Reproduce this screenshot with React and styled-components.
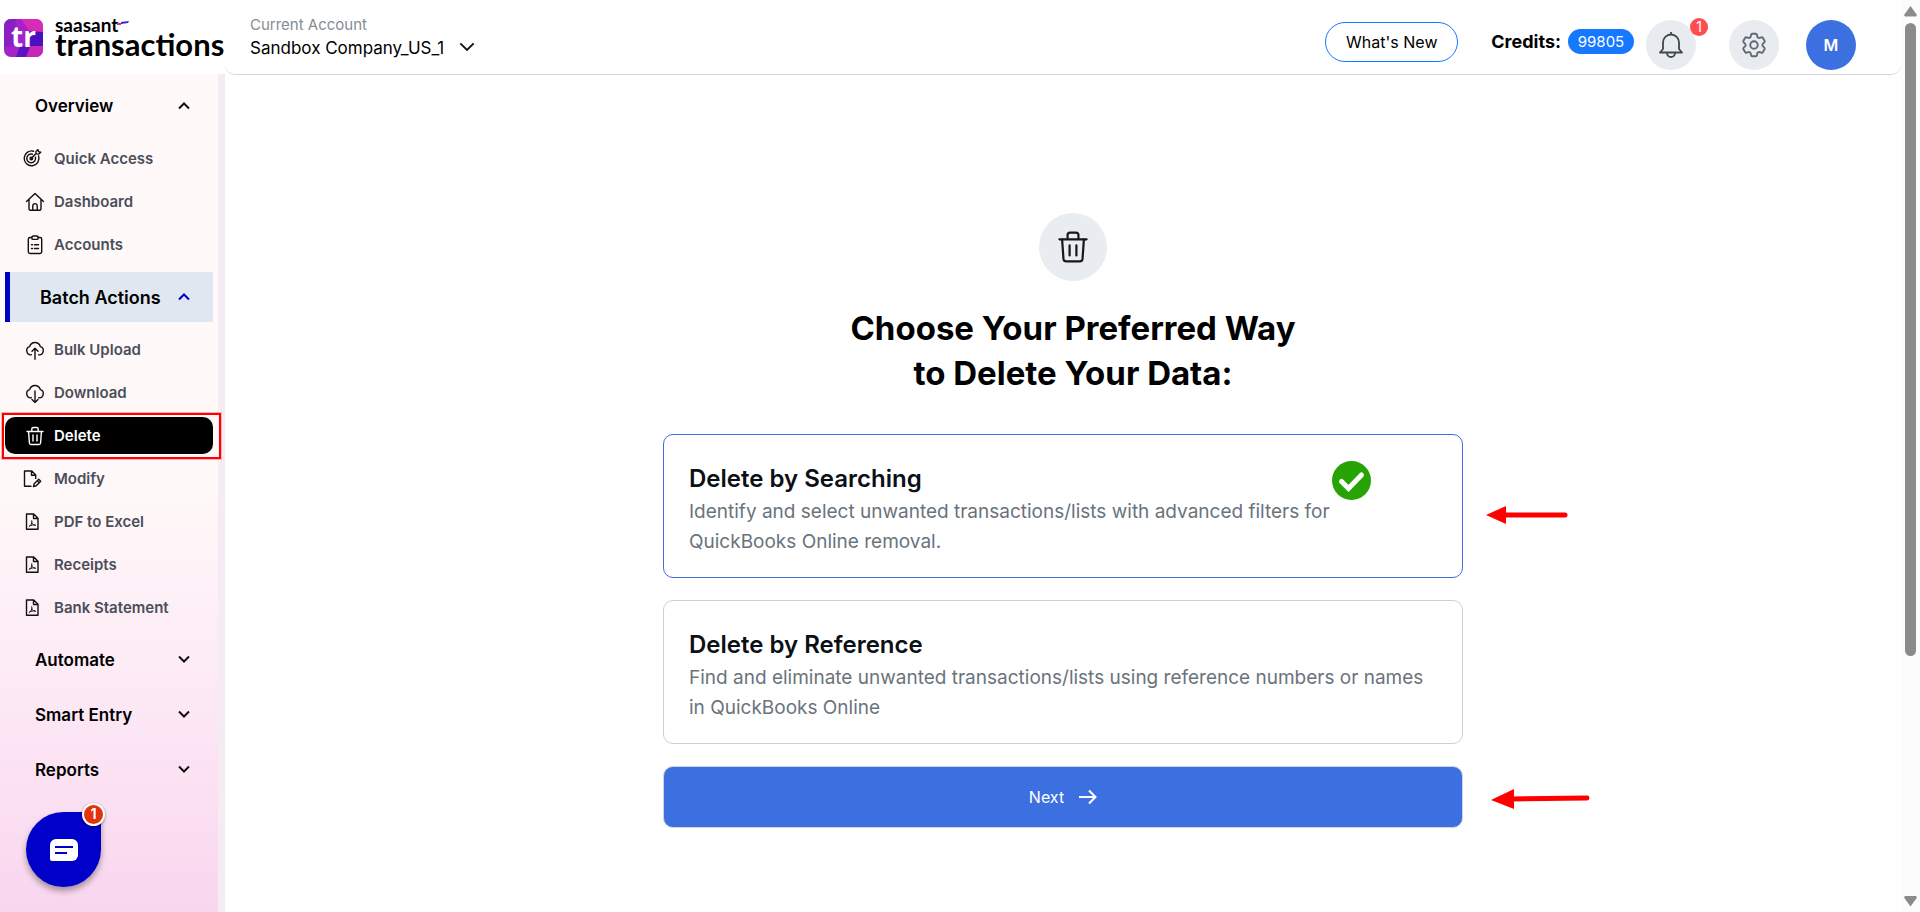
import { useState } from "react";
import styled, { createGlobalStyle } from "styled-components";
import { HiOutlineCog6Tooth } from "react-icons/hi2";

const menu = [
  {
    title: "Overview",
    open: true,
    items: [
      { label: "Quick Access", icon: "target", compact: true },
      { label: "Dashboard", icon: "home" },
      { label: "Accounts", icon: "clipboard" },
    ],
  },
  {
    title: "Batch Actions",
    open: true,
    current: true,
    items: [
      { label: "Bulk Upload", icon: "upload" },
      { label: "Download", icon: "download" },
      { label: "Delete", icon: "trash", active: true },
      { label: "Modify", icon: "modify", compact: true },
      { label: "PDF to Excel", icon: "pdf", compact: true },
      { label: "Receipts", icon: "pdf", compact: true },
      { label: "Bank Statement", icon: "pdf", compact: true },
    ],
  },
  { title: "Automate", items: [] },
  { title: "Smart Entry", items: [] },
  { title: "Reports", items: [] },
];

const options = [
  {
    id: "search",
    title: "Delete by Searching",
    text: "Identify and select unwanted transactions/lists with advanced filters for QuickBooks Online removal.",
  },
  {
    id: "reference",
    title: "Delete by Reference",
    text: "Find and eliminate unwanted transactions/lists using reference numbers or names in QuickBooks Online",
  },
];

const icons = {
  target: (
    <>
      <path d="M16.6 7A7.400 7.400 0 1 1 11.500 2.200" />
      <path d="M13.400 8.200A4.400 4.400 0 1 1 10.400 5.200" />
      <circle cx="9.300" cy="9.500" r="1.300" />
      <path d="m9.500 9.200 4.500-4.700V2.400l2-1.800.5 2 2.200.6-1.900 1.900-2.600-.2" />
    </>
  ),
  home: (
    <>
      <path d="M1.500 9.600 10 1.400l8.500 8.200M4 7.500v9.300a1.500 1.500 0 0 0 1.500 1.500h9a1.500 1.500 0 0 0 1.500-1.500V7.500" />
      <path d="M7.800 18v-4.200a2.200 2.200 0 0 1 4.400 0V18" />
    </>
  ),
  clipboard: (
    <>
      <path d="M6.800 2.500H5A1.700 1.700 0 0 0 3.300 4.200v12.600A1.700 1.700 0 0 0 5 18.500h10a1.700 1.700 0 0 0 1.700-1.700V4.200A1.700 1.700 0 0 0 15 2.500h-1.800" />
      <rect x="6.800" y="1" width="6.400" height="3.400" rx="1.500" />
      <path d="M6.500 9.800h1M9.500 9.800h4M6.500 13.500h1M9.500 13.500h4" />
    </>
  ),
  upload: (
    <>
      <path d="M6.300 14.800A4.200 4.200 0 0 1 4.700 6.600 5.500 5.500 0 0 1 15.300 6.600 4.200 4.200 0 0 1 13.700 14.800" />
      <path d="M10 19.300V8.500M7 11.300l3-3 3 3" />
    </>
  ),
  download: (
    <>
      <path d="M6.300 14.800A4.200 4.200 0 0 1 4.700 6.600 5.500 5.500 0 0 1 15.300 6.600 4.200 4.200 0 0 1 13.700 14.800" />
      <path d="M10 8v11.200M7 16.500l3 3 3-3" />
    </>
  ),
  trash: (
    <>
      <path d="M2 5.500h16M6.800 5.300V3a1.500 1.500 0 0 1 1.500-1.500h3.400A1.500 1.500 0 0 1 13.200 3v2.300" />
      <path d="m3.600 5.700.8 11.300a1.700 1.700 0 0 0 1.700 1.500h7.800a1.700 1.700 0 0 0 1.700-1.500l.8-11.300" />
      <path d="M8 9v6M12 9v6" />
    </>
  ),
  modify: (
    <>
      <path d="M9 17.300H2.500V2h7.300l3.900 3.900v3.500M9.500 2.200v4h4" />
      <path d="m11.500 17.500.7-2.700 4.500-4.500 2 2-4.500 4.500-2.700.7ZM15.300 11.700l2 2" />
    </>
  ),
  pdf: (
    <>
      <path d="M4.500 2h7.200l4.300 4.300v11H4.500ZM11.500 2.200v4.300H16" />
      <path d="M9.800 8.700c.5 2.700-.6 4.600-2.600 5.700M9.900 10.700c.6 1.600 1.700 2.500 3.700 2.600M7.800 13.900c1.500-.9 3.200-1.100 5-1" strokeWidth="1" />
    </>
  ),
};

function Icon({ name, size = 20, stroke = 1.4 }) {
  return (
    <svg
      width={size}
      height={size}
      viewBox="0 0 20 20"
      fill="none"
      stroke="currentColor"
      strokeWidth={stroke}
      strokeLinecap="round"
      strokeLinejoin="round"
      aria-hidden="true"
    >
      {icons[name]}
    </svg>
  );
}

function Chevron({ up, width = 12, color = "#111" }) {
  return (
    <svg width={width} height={width} viewBox="0 0 12 12" fill="none" stroke={color} strokeWidth={width > 12 ? 1.4 : 2} aria-hidden="true">
      <path d={up ? "M1 8.500 6 3.500l5 5" : "M1 2.500l5 5 5-5"} />
    </svg>
  );
}

function Logo() {
  return (
    <Brand href="#">
      <BrandMark>
        <svg width="39" height="38" viewBox="0 0 39 38" aria-hidden="true">
          <path fill="#a522c9" d="M0 0h39v38H0z" />
          <path fill="#d92bb5" d="M17 0h22v13H26z" />
          <path fill="#8a1fc2" d="M0 0h12L10 27 0 28z" />
          <path fill="#4b0fc0" d="m25 12 14 1v14H25z" />
          <path fill="#c727b9" d="M26 27h13v11H21z" />
          <path fill="#5a14c4" d="m12 38 4-11 10 1-4 10z" />
        </svg>
        <span>tr</span>
      </BrandMark>
      <BrandName>
        <small>saasant</small>
        <svg width="12" height="4" viewBox="0 0 12 4" aria-hidden="true">
          <path fill="#e0219b" d="M0 2h4v2H0z" />
          <path fill="#3323d6" d="m4 1 8-1-1 2-7 1z" />
        </svg>
        <strong>transactions</strong>
      </BrandName>
    </Brand>
  );
}

function Sidebar() {
  return (
    <SidePanel>
      <Logo />
      <Nav>
        {menu.map((group) => (
          <section key={group.title}>
            <GroupButton type="button" $current={group.current} aria-expanded={!!group.open}>
              {group.title}
              <Chevron up={group.open} color={group.current ? "#0000c4" : "#111"} />
            </GroupButton>
            {group.items.length > 0 && (
              <ItemList>
                {group.items.map((item) => (
                  <li key={item.label}>
                    <ItemLink href="#" $active={item.active} $compact={item.compact}>
                      <Icon name={item.icon} />
                      {item.label}
                      {item.active && <Highlight />}
                    </ItemLink>
                  </li>
                ))}
              </ItemList>
            )}
          </section>
        ))}
      </Nav>
      <ChatButton type="button" aria-label="Open chat">
        <svg width="28" height="22" viewBox="0 0 28 22" aria-hidden="true">
          <path fill="#fff" d="M6 0h16a6 6 0 0 1 6 6v10a6 6 0 0 1-6 6H2a2 2 0 0 1-2-2V6a6 6 0 0 1 6-6Z" />
          <path stroke="#0000c9" strokeWidth="2" d="M5 8h18M5 14h12" />
        </svg>
        <ChatBadge>1</ChatBadge>
      </ChatButton>
    </SidePanel>
  );
}

function Header() {
  return (
    <TopBar>
      <Account type="button">
        <small>Current Account</small>
        <span>
          Sandbox Company_US_1
          <Chevron width={16} />
        </span>
      </Account>
      <Actions>
        <NewsButton type="button">What's New</NewsButton>
        <Credits>
          Credits: <span>99805</span>
        </Credits>
        <RoundButton type="button" aria-label="Notifications">
          <svg width="26" height="28" viewBox="0 0 26 28" fill="none" stroke="#40464d" strokeWidth="1.800" strokeLinejoin="round" aria-hidden="true">
            <path d="M2 21.500h22l-3-3.500v-6.500a8 8 0 0 0-16 0V18ZM13 3.500V1M9 22a4 4 0 0 0 8 0" />
          </svg>
          <Badge>1</Badge>
        </RoundButton>
        <RoundButton type="button" aria-label="Settings">
          <HiOutlineCog6Tooth size={30} />
        </RoundButton>
        <RoundButton type="button" $primary>
          M
        </RoundButton>
      </Actions>
    </TopBar>
  );
}

function DeleteWizard() {
  const [selected, setSelected] = useState("search");

  return (
    <Wizard>
      <Intro>
        <IntroIcon>
          <Icon name="trash" size={34} stroke={1.3} />
        </IntroIcon>
        <h1>
          Choose Your Preferred Way
          <br />
          to Delete Your Data:
        </h1>
      </Intro>
      <Choices>
        {options.map((option) => (
          <Card key={option.id} $selected={selected === option.id}>
            <input
              type="radio"
              name="delete-mode"
              checked={selected === option.id}
              onChange={() => setSelected(option.id)}
            />
            <CardText $selected={selected === option.id}>
              <h2>{option.title}</h2>
              <p>{option.text}</p>
            </CardText>
            {selected === option.id && (
              <svg width="40" height="40" viewBox="0 0 40 40" aria-hidden="true">
                <circle cx="19.500" cy="19.500" r="19.500" fill="#27a306" />
                <path d="m9.500 20.500 7 7L29.500 14" fill="none" stroke="#fff" strokeWidth="5" strokeLinecap="round" />
              </svg>
            )}
            {option.id === "search" && (
              <Pointer>
                <svg width="84" height="20" viewBox="0 0 84 20" aria-hidden="true">
                  <path fill="red" d="m0 10 20-9v18z" />
                  <path stroke="red" strokeWidth="5" strokeLinecap="round" d="M18 10h61" />
                </svg>
              </Pointer>
            )}
          </Card>
        ))}
        <NextButton type="button">
          Next
          <svg width="18" height="16" viewBox="0 0 18 16" fill="none" stroke="currentColor" strokeWidth="2" aria-hidden="true">
            <path d="M0 8h16M10 1.500 16.500 8 10 14.500" />
          </svg>
          <Pointer $wide>
            <svg width="100" height="22" viewBox="0 0 100 22" aria-hidden="true">
              <path fill="red" d="m0 12 23-11v20z" />
              <path stroke="red" strokeWidth="5" strokeLinecap="round" d="m21 11 75-1" />
            </svg>
          </Pointer>
        </NextButton>
      </Choices>
    </Wizard>
  );
}

export default function App() {
  return (
    <>
      <GlobalStyle />
      <Page>
        <Sidebar />
        <Main>
          <Header />
          <DeleteWizard />
        </Main>
        <ScrollTrack aria-hidden="true">
          <svg width="13" height="11" viewBox="0 0 13 11">
            <path fill="#8b8b8b" d="M6.500 0 13 9l-1 1.500H1L0 9z" />
          </svg>
          <ScrollSpace>
            <ScrollThumb />
          </ScrollSpace>
          <svg width="13" height="11" viewBox="0 0 13 11">
            <path fill="#8b8b8b" d="M6.500 10.500 0 1.500 1 0h11l1 1.500z" />
          </svg>
        </ScrollTrack>
      </Page>
    </>
  );
}

const GlobalStyle = createGlobalStyle`
  * {
    box-sizing: border-box;
    margin: 0;
    padding: 0;
  }

  body {
    background: #fff;
    color: #000;
    font-family: Inter, "Liberation Sans", sans-serif;
    font-size: 16px;
  }

  button {
    border: none;
    background: none;
    color: inherit;
    font: inherit;
    cursor: pointer;
  }

  a {
    color: inherit;
    text-decoration: none;
  }
`;

const Page = styled.div`
  display: flex;
  min-height: 100vh;
`;

const SidePanel = styled.aside`
  flex: none;
  width: 225px;
  display: flex;
  flex-direction: column;
`;

const Brand = styled.a`
  height: 74px;
  padding: 19px 0 0 4px;
  display: flex;
  align-items: flex-start;
  gap: 12px;
`;

const BrandMark = styled.span`
  display: grid;
  grid-template-rows: 38px;
  width: 39px;

  > * {
    grid-area: 1 / 1;
  }

  svg {
    border-radius: 7px;
  }

  span {
    z-index: 1;
    color: #fff;
    font-family: "Open Sans", sans-serif;
    font-size: 28px;
    font-weight: 700;
    line-height: 35px;
    text-align: center;
  }
`;

const BrandName = styled.span`
  position: relative;
  display: flex;
  flex-direction: column;
  font-family: Lato, sans-serif;

  small {
    font-size: 19px;
    font-weight: 700;
    line-height: 12px;
  }

  svg {
    position: absolute;
    top: 2px;
    left: 62px;
  }

  strong {
    font-size: 31px;
    font-weight: 700;
    line-height: 27px;
  }
`;

const Nav = styled.nav`
  flex: 1;
  padding: 7px 5px 0;
  border-right: 7px solid #f4ebf3;
  background: linear-gradient(#fff9f9 0, #fff8f8 50%, #fdeaf6 72%, #f9d6ee 100%);
`;

const GroupButton = styled.button`
  width: 208px;
  height: 50px;
  margin-bottom: 5px;
  padding: 0 23px 0 30px;
  display: flex;
  align-items: center;
  justify-content: space-between;
  font-size: 17px;
  font-weight: 600;

  ${({ $current }) =>
    $current &&
    `
    border-left: 5px solid #0000c4;
    background: #dfe8f1;
    font-size: 18px;
  `}
`;

const ItemList = styled.ul`
  padding: 4px 0 9px;
  display: flex;
  flex-direction: column;
  gap: 6px;
  list-style: none;
`;

const ItemLink = styled.a`
  position: relative;
  width: 208px;
  height: 37px;
  padding-left: ${({ $compact }) => ($compact ? "17px" : "20px")};
  border-radius: 10px;
  display: flex;
  align-items: center;
  gap: ${({ $compact }) => ($compact ? "12px" : "9px")};
  background: ${({ $active }) => ($active ? "#000" : "none")};
  color: ${({ $active }) => ($active ? "#fff" : "#4a4e5a")};
  font-size: 15px;
  font-weight: 600;

  svg {
    color: ${({ $active }) => ($active ? "#fff" : "#111")};
  }
`;

const Highlight = styled.span`
  position: absolute;
  inset: -4px -8px -5px -3px;
  border: 2px solid red;
  box-shadow: 0 0 0 1px #ffb3b3;
`;

const ChatButton = styled.button`
  position: fixed;
  left: 26px;
  bottom: 25px;
  width: 75px;
  height: 75px;
  border-radius: 50% 0 50% 50%;
  display: flex;
  align-items: center;
  justify-content: center;
  background: #0000c9;
  box-shadow: 0 4px 6px rgba(0, 0, 0, 0.35);
`;

const ChatBadge = styled.span`
  position: absolute;
  top: -9px;
  right: -4px;
  width: 23px;
  height: 23px;
  border: 2px solid #fff;
  border-radius: 50%;
  background: #e03410;
  color: #fff;
  font-size: 14px;
  font-weight: 700;
  line-height: 17px;
  box-shadow: 0 1px 3px rgba(0, 0, 0, 0.4);
`;

const Main = styled.main`
  flex: 1;
  min-width: 0;
`;

const TopBar = styled.header`
  height: 75px;
  padding: 14px 45px 0 25px;
  border-bottom: 1px solid #d5d8da;
  border-radius: 0 0 10px 10px;
  display: flex;
  align-items: flex-start;
  justify-content: space-between;
`;

const Account = styled.button`
  text-align: left;

  small {
    display: block;
    color: #858d94;
    font-size: 15px;
    line-height: 22px;
  }

  span {
    display: flex;
    align-items: center;
    gap: 15px;
    font-size: 17px;
    line-height: 24px;
  }
`;

const Actions = styled.div`
  display: flex;
  align-items: center;
  height: 61px;
`;

const NewsButton = styled.button`
  width: 133px;
  height: 40px;
  margin: 0 33px 5px 0;
  border: 1px solid #1677ff;
  border-radius: 20px;
  font-size: 16px;
`;

const Credits = styled.div`
  margin: 0 12px 6px 0;
  display: flex;
  align-items: center;
  gap: 7px;
  font-size: 18px;
  font-weight: 700;

  span {
    width: 66px;
    border-radius: 13px;
    background: #1677ff;
    color: #fff;
    font-size: 15px;
    font-weight: 400;
    line-height: 25px;
    text-align: center;
  }
`;

const RoundButton = styled.button`
  position: relative;
  width: 50px;
  height: 50px;
  border-radius: 50%;
  display: flex;
  align-items: center;
  justify-content: center;
  background: ${({ $primary }) => ($primary ? "#3c6fe0" : "#e8ebef")};
  color: ${({ $primary }) => ($primary ? "#fff" : "#5f6972")};
  font-weight: 600;

  & + & {
    margin-left: 33px;
  }

  &:last-child {
    margin-left: 27px;
  }
`;

const Badge = styled.span`
  position: absolute;
  top: -2px;
  right: -12px;
  width: 18px;
  height: 18px;
  border-radius: 50%;
  background: #ff4d4f;
  color: #fff;
  font-size: 14px;
  font-weight: 400;
  line-height: 18px;
`;

const Wizard = styled.div`
  padding: 138px 20px 40px;
  display: flex;
  flex-direction: column;
  align-items: center;
`;

const Intro = styled.div`
  padding-left: 20px;
  display: flex;
  flex-direction: column;
  align-items: center;
  text-align: center;

  h1 {
    margin: 25px 0 38px;
    font-size: 33px;
    font-weight: 700;
    line-height: 45px;
  }
`;

const IntroIcon = styled.span`
  width: 68px;
  height: 68px;
  border-radius: 50%;
  display: flex;
  align-items: center;
  justify-content: center;
  background: #e9edf2;
  color: #15181c;
`;

const Choices = styled.div`
  width: 100%;
  max-width: 800px;
  display: flex;
  flex-direction: column;
  gap: 22px;
`;

const Card = styled.label`
  position: relative;
  padding: 26px 25px 20px;
  border: 1px solid ${({ $selected }) => ($selected ? "#3c6fe0" : "#c8d0da")};
  border-radius: 10px;
  display: flex;
  align-items: flex-start;
  cursor: pointer;

  input {
    position: absolute;
    opacity: 0;
  }
`;

const CardText = styled.div`
  max-width: ${({ $selected }) => ($selected ? "643px" : "none")};

  h2 {
    color: #0b0f16;
    font-size: 24px;
    font-weight: 600;
    line-height: 36px;
  }

  p {
    color: #6a737c;
    font-size: 19px;
    line-height: 30px;
  }
`;

const Pointer = styled.span`
  position: absolute;
  top: ${({ $wide }) => ($wide ? "21px" : "70px")};
  left: 100%;
  padding-left: ${({ $wide }) => ($wide ? "29px" : "24px")};

  svg {
    display: block;
  }
`;

const NextButton = styled.button`
  position: relative;
  height: 62px;
  border: 1px solid #cdd5e4;
  border-radius: 10px;
  display: flex;
  align-items: center;
  justify-content: center;
  gap: 15px;
  background: #3c6fe0;
  color: #fff;
  font-size: 16px;
`;

const ScrollTrack = styled.div`
  flex: none;
  width: 19px;
  padding: 6px 3px 5px;
  display: flex;
  flex-direction: column;
  align-items: center;
  background: #fcfcfc;
`;

const ScrollSpace = styled.div`
  flex: 1;
  width: 11px;
  padding: 6px 0;
`;

const ScrollThumb = styled.div`
  height: 73%;
  border-radius: 6px;
  background: #8b8b8b;
`;
